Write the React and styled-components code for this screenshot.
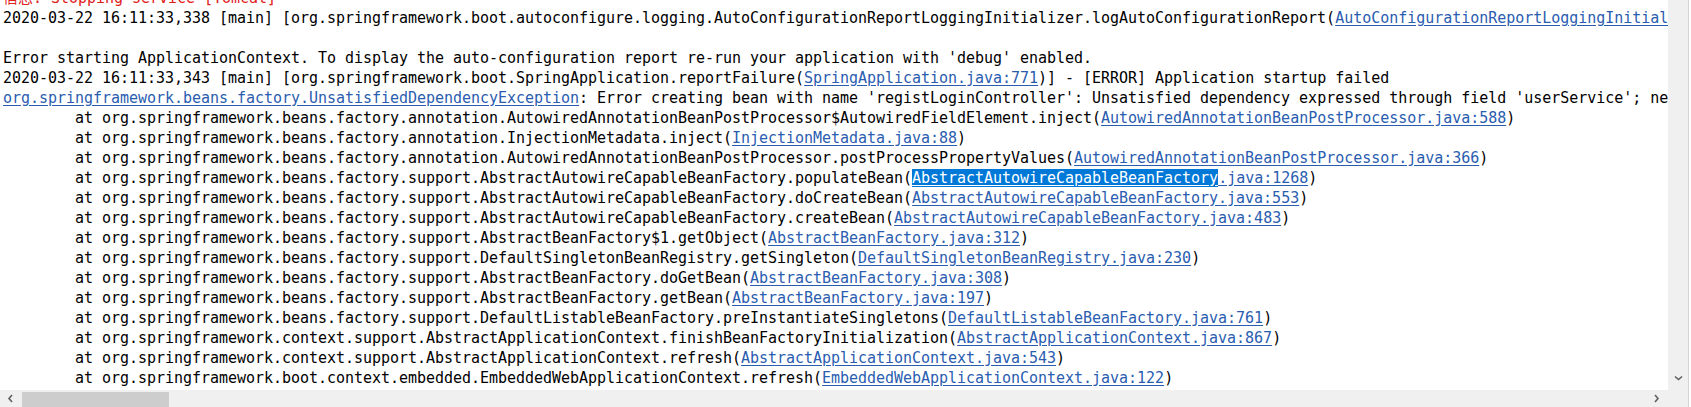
import React from "react";
import styled, { createGlobalStyle } from "styled-components";

const GlobalStyle = createGlobalStyle`
  html, body { margin: 0; padding: 0; background: #ffffff; overflow: hidden; }
  #root { width: 1691px; height: 407px; }
`;

const Frame = styled.div`
  display: grid;
  grid-template-columns: 1668px 20px 1px 2px;
  grid-template-rows: 390px 17px;
  width: 1691px;
  height: 407px;
  background: #ffffff;
`;

const Console = styled.div`
  grid-column: 1;
  grid-row: 1;
  overflow: hidden;
  background: #ffffff;
`;

const Lines = styled.div`
  margin-top: -12px;
  padding-left: 3px;
  font-family: "DejaVu Sans Mono", "Liberation Mono", "Noto Sans CJK SC", monospace;
  font-size: 15px;
  letter-spacing: -0.03px;
  line-height: 20px;
  color: #000000;
  white-space: pre;
  tab-size: 8;
`;

const Line = styled.div`
  height: 20px;
  color: ${(p) => (p.$err ? "#e0201b" : "#000000")};
`;

const Link = styled.span`
  color: #2a5db0;
  text-decoration: underline;
  text-underline-offset: 2px;
`;

const Selected = styled.span`
  background: #0078d7;
  color: #ffffff;
  text-decoration: underline;
  text-underline-offset: 2px;
`;

const VScroll = styled.div`
  grid-column: 2;
  grid-row: 1;
  background: #f0f0f0;
  display: flex;
  flex-direction: column;
  justify-content: flex-end;
  align-items: center;
`;

const Corner = styled.div`
  grid-column: 2;
  grid-row: 2;
  background: #f0f0f0;
`;

const Edge = styled.div`
  grid-column: 3;
  grid-row: 1 / span 2;
  background: #d4d4d4;
`;

const HScroll = styled.div`
  grid-column: 1;
  grid-row: 2;
  background: #f0f0f0;
  display: flex;
  align-items: stretch;
`;

const ArrowBtn = styled.div`
  width: ${(p) => p.$w || 20}px;
  height: ${(p) => p.$h || 17}px;
  display: flex;
  align-items: center;
  justify-content: center;
  flex: none;
`;

const Thumb = styled.div`
  width: 147px;
  margin: 2px 0 0 2px;
  background: #cdcdcd;
`;

const Spacer = styled.div`
  flex: 1;
`;

const Chevron = ({ dir }) => {
  const paths = {
    left: "M5 1 L2 4.5 L5 8",
    right: "M2 1 L5 4.5 L2 8",
    down: "M1 2.5 L4.5 5.5 L8 2.5",
  };
  const w = dir === "down" ? 9 : 7;
  const h = dir === "down" ? 7 : 9;
  return (
    <svg width={w} height={h} viewBox={`0 0 ${w} ${h}`}>
      <path d={paths[dir]} fill="none" stroke="#606060" strokeWidth="1.6" />
    </svg>
  );
};

const L = (t) => ({ t });
const K = (t) => ({ t, link: true });
const S = (t) => ({ t, sel: true });

const log = [
  { err: true, parts: [L("信息: Stopping service [Tomcat]")] },
  {
    parts: [
      L("2020-03-22 16:11:33,338 [main] [org.springframework.boot.autoconfigure.logging.AutoConfigurationReportLoggingInitializer.logAutoConfigurationReport("),
      K("AutoConfigurationReportLoggingInitializer.java:101"),
      L(")] - "),
    ],
  },
  { parts: [L("")] },
  { parts: [L("Error starting ApplicationContext. To display the auto-configuration report re-run your application with 'debug' enabled.")] },
  {
    parts: [
      L("2020-03-22 16:11:33,343 [main] [org.springframework.boot.SpringApplication.reportFailure("),
      K("SpringApplication.java:771"),
      L(")] - [ERROR] Application startup failed"),
    ],
  },
  {
    parts: [
      K("org.springframework.beans.factory.UnsatisfiedDependencyException"),
      L(": Error creating bean with name 'registLoginController': Unsatisfied dependency expressed through field 'userService'; nested exception is org.springframework.beans.factory.NoSuchBeanDefinitionException"),
    ],
  },
  { parts: [L("\tat org.springframework.beans.factory.annotation.AutowiredAnnotationBeanPostProcessor$AutowiredFieldElement.inject("), K("AutowiredAnnotationBeanPostProcessor.java:588"), L(")")] },
  { parts: [L("\tat org.springframework.beans.factory.annotation.InjectionMetadata.inject("), K("InjectionMetadata.java:88"), L(")")] },
  { parts: [L("\tat org.springframework.beans.factory.annotation.AutowiredAnnotationBeanPostProcessor.postProcessPropertyValues("), K("AutowiredAnnotationBeanPostProcessor.java:366"), L(")")] },
  { parts: [L("\tat org.springframework.beans.factory.support.AbstractAutowireCapableBeanFactory.populateBean("), S("AbstractAutowireCapableBeanFactory"), K(".java:1268"), L(")")] },
  { parts: [L("\tat org.springframework.beans.factory.support.AbstractAutowireCapableBeanFactory.doCreateBean("), K("AbstractAutowireCapableBeanFactory.java:553"), L(")")] },
  { parts: [L("\tat org.springframework.beans.factory.support.AbstractAutowireCapableBeanFactory.createBean("), K("AbstractAutowireCapableBeanFactory.java:483"), L(")")] },
  { parts: [L("\tat org.springframework.beans.factory.support.AbstractBeanFactory$1.getObject("), K("AbstractBeanFactory.java:312"), L(")")] },
  { parts: [L("\tat org.springframework.beans.factory.support.DefaultSingletonBeanRegistry.getSingleton("), K("DefaultSingletonBeanRegistry.java:230"), L(")")] },
  { parts: [L("\tat org.springframework.beans.factory.support.AbstractBeanFactory.doGetBean("), K("AbstractBeanFactory.java:308"), L(")")] },
  { parts: [L("\tat org.springframework.beans.factory.support.AbstractBeanFactory.getBean("), K("AbstractBeanFactory.java:197"), L(")")] },
  { parts: [L("\tat org.springframework.beans.factory.support.DefaultListableBeanFactory.preInstantiateSingletons("), K("DefaultListableBeanFactory.java:761"), L(")")] },
  { parts: [L("\tat org.springframework.context.support.AbstractApplicationContext.finishBeanFactoryInitialization("), K("AbstractApplicationContext.java:867"), L(")")] },
  { parts: [L("\tat org.springframework.context.support.AbstractApplicationContext.refresh("), K("AbstractApplicationContext.java:543"), L(")")] },
  { parts: [L("\tat org.springframework.boot.context.embedded.EmbeddedWebApplicationContext.refresh("), K("EmbeddedWebApplicationContext.java:122"), L(")")] },
];

export default function App() {
  return (
    <>
      <GlobalStyle />
      <Frame>
        <Console>
          <Lines>
            {log.map((line, i) => (
              <Line key={i} $err={line.err}>
                {line.parts.map((p, j) =>
                  p.sel ? (
                    <Selected key={j}>{p.t}</Selected>
                  ) : p.link ? (
                    <Link key={j}>{p.t}</Link>
                  ) : (
                    <React.Fragment key={j}>{p.t}</React.Fragment>
                  )
                )}
              </Line>
            ))}
          </Lines>
        </Console>
        <VScroll>
          <ArrowBtn $w={20} $h={26}>
            <Chevron dir="down" />
          </ArrowBtn>
        </VScroll>
        <Corner />
        <Edge />
        <HScroll>
          <ArrowBtn $w={20}>
            <Chevron dir="left" />
          </ArrowBtn>
          <Thumb />
          <Spacer />
          <ArrowBtn $w={24}>
            <Chevron dir="right" />
          </ArrowBtn>
        </HScroll>
      </Frame>
    </>
  );
}
